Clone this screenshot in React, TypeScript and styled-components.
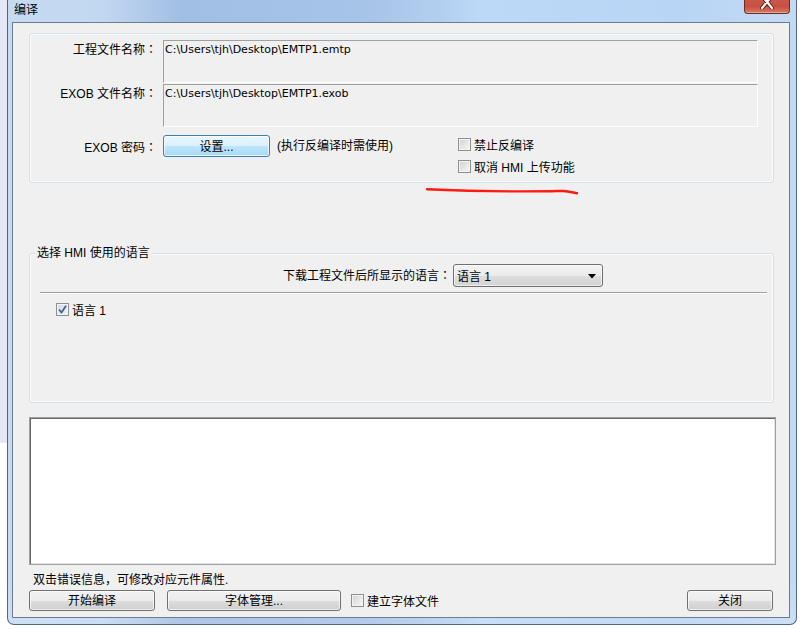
import React from 'react';
import styled, { createGlobalStyle } from 'styled-components';

const Global = createGlobalStyle`
  html, body { margin: 0; padding: 0; background: #fff; }
  body {
    font-family: "Liberation Sans", "Noto Sans CJK SC", sans-serif;
    font-size: 12px;
    color: #000;
  }
  * { box-sizing: border-box; }
`;

const Desktop = styled.div`
  display: flex;
  width: 805px;
  height: 629px;
  overflow: hidden;
  background: #fff;
`;

const DesktopStrip = styled.div`
  width: 7px;
  flex: none;
  background: linear-gradient(to bottom, #e6e7f7 0, #e6e7f7 443px, #fff 443px);
`;

const Window = styled.div`
  width: 790px;
  height: 625px;
  flex: none;
  border: 1px solid #54667b;
  border-top: none;
  border-radius: 0 0 7px 7px;
  background:
    linear-gradient(to bottom, rgba(255,255,255,0) 0, rgba(255,255,255,0) 580px, rgba(255,255,255,0.15) 625px),
    linear-gradient(to right, #c6daf1 0%, #c2d8f1 12%, #a1bee4 22%, #a6c3e8 45%, #b3cff0 55%, #bcd9f8 60%, #b8d5f5 85%, #c3daf3 100%);
  display: flex;
  flex-direction: column;
  padding: 0 6px 6px 4px;
`;

const TitleBar = styled.div`
  height: 22px;
  flex: none;
  display: flex;
  align-items: flex-start;
  justify-content: space-between;
  padding-left: 2px;
`;

const TitleText = styled.div`
  font-family: "Noto Sans CJK SC", sans-serif;
  font-size: 12px;
  line-height: 14px;
  margin-top: 2px;
  color: #000;
`;

const CloseButton = styled.div`
  width: 46px;
  height: 14px;
  border: 1px solid #6c2b24;
  border-top: none;
  border-radius: 0 0 4px 4px;
  background: linear-gradient(to bottom, #c8584c 0%, #c9503f 50%, #d77a66 100%);
  box-shadow: inset 0 -1px 0 rgba(255,255,255,0.35);
  display: flex;
  justify-content: center;
  align-items: flex-start;
`;

const Client = styled.div`
  flex: 1;
  border: 1px solid #6d7d8e;
  background: #f0f0f0;
  display: flex;
  flex-direction: column;
  padding: 10px 0 0 16px;
  position: relative;
`;

const GroupBox = styled.div`
  width: 745px;
  height: 150px;
  flex: none;
  border: 1px solid #d5dfe5;
  border-radius: 3px;
  box-shadow: inset 0 0 0 1px #fbfbfb;
  position: relative;
`;

const TopGroup = styled(GroupBox)`
  padding: 6px 15px 0 0;
  display: flex;
  flex-direction: column;
`;

const LangGroup = styled(GroupBox)`
  margin-top: 70px;
  padding-top: 10px;
  display: flex;
  flex-direction: column;
`;

const Legend = styled.div`
  position: absolute;
  top: -8px;
  left: 5px;
  padding: 0 2px;
  line-height: 14px;
  background: #f0f0f0;
`;

const Colon = styled.span`
  font-family: "Noto Sans CJK TC", sans-serif;
`;

const FieldRow = styled.div<{ $gap?: number }>`
  display: grid;
  grid-template-columns: 127px 1fr;
  column-gap: 6px;
  margin-top: ${(p) => p.$gap ?? 0}px;
`;

const FieldLabel = styled.div`
  text-align: right;
  line-height: 14px;
  padding-top: 2px;
  white-space: nowrap;
`;

const ReadOnlyField = styled.div`
  height: 43px;
  border-top: 1px solid #a0a0a0;
  border-left: 1px solid #a0a0a0;
  border-right: 1px solid #fff;
  border-bottom: 1px solid #fff;
  padding: 2px 0 0 1px;
  font-family: "DejaVu Sans", "Noto Sans CJK SC", sans-serif;
  font-size: 11px;
  line-height: 13px;
  white-space: nowrap;
`;

const PasswordRow = styled.div`
  display: flex;
  align-items: flex-start;
  margin-top: 8px;
`;

const RowLabel = styled.div`
  width: 127px;
  margin-right: 6px;
  text-align: right;
  line-height: 23px;
  white-space: nowrap;
`;

const Hint = styled.div`
  width: 181px;
  margin-left: 7px;
  line-height: 23px;
  white-space: nowrap;
`;

const CheckColumn = styled.div`
  display: flex;
  flex-direction: column;
  gap: 3px;
`;

const CheckRow = styled.label<{ $indent?: number; $top?: number }>`
  height: 19px;
  display: flex;
  align-items: center;
  gap: 3px;
  white-space: nowrap;
  margin-left: ${(p) => p.$indent ?? 0}px;
  margin-top: ${(p) => p.$top ?? 0}px;
`;

const Box = styled.span<{ $checked?: boolean }>`
  width: 13px;
  height: 13px;
  flex: none;
  border: 1px solid #8e8f8f;
  background: ${(p) =>
    p.$checked
      ? 'linear-gradient(135deg, #d3d9e6 0%, #eef1f6 100%)'
      : 'linear-gradient(135deg, #cfcfcf 0%, #e9e9e9 60%, #f7f7f7 100%)'};
  box-shadow: inset 0 0 0 1px #f4f4f4;
  display: flex;
  align-items: center;
  justify-content: center;
`;

const buttonBase = `
  height: 21px;
  border: 1px solid #707070;
  border-radius: 3px;
  background: linear-gradient(to bottom, #f2f2f2 0%, #ebebeb 50%, #dddddd 51%, #cfcfcf 100%);
  box-shadow: inset 0 0 0 1px rgba(255,255,255,0.7);
  font: inherit;
  color: #000;
  padding: 0;
  display: flex;
  align-items: center;
  justify-content: center;
  line-height: 14px;
`;

const Button = styled.button<{ $w: number; $ml?: number }>`
  ${buttonBase}
  width: ${(p) => p.$w}px;
  margin-left: ${(p) => p.$ml ?? 0}px;
  flex: none;
`;

const BlueButton = styled(Button)`
  height: 22px;
  border-color: #3c7fb1;
  background: linear-gradient(to bottom, #eaf6fd 0%, #d9f0fc 50%, #bee6fd 51%, #a7d9f5 100%);
  padding-top: 1px;
`;

const ComboRow = styled.div`
  display: flex;
  align-items: center;
  padding-left: 253px;
`;

const ComboLabel = styled.div`
  line-height: 14px;
  margin-right: 2px;
  white-space: nowrap;
`;

const Combo = styled.div`
  width: 150px;
  height: 23px;
  border: 1px solid #707070;
  border-radius: 3px;
  background: linear-gradient(to bottom, #f2f2f2 0%, #ebebeb 50%, #dddddd 51%, #d4d4d4 100%);
  box-shadow: inset 0 0 0 1px rgba(255,255,255,0.6);
  display: flex;
  align-items: center;
  justify-content: space-between;
  padding: 2px 6px 0 3px;
  line-height: 14px;
`;

const Separator = styled.div`
  width: 727px;
  height: 2px;
  margin: 5px 0 0 10px;
  border-top: 1px solid #a0a0a0;
  border-bottom: 1px solid #fff;
`;

const ListBox = styled.div`
  width: 747px;
  height: 148px;
  flex: none;
  margin-top: 14px;
  background: #fff;
  border: 1px solid #a0a0a0;
  box-shadow: inset 1px 1px 0 #696969, inset -1px -1px 0 #e3e3e3;
`;

const Status = styled.div`
  margin: 8px 0 0 4px;
  line-height: 14px;
`;

const ButtonRow = styled.div`
  width: 744px;
  margin-top: 3px;
  display: flex;
  align-items: center;
`;

const CloseBtn = styled(Button)`
  margin-left: auto;
`;

const Scribble = styled.svg`
  position: absolute;
  left: 410px;
  top: 162px;
  width: 160px;
  height: 12px;
  overflow: visible;
`;

const Check = ({ checked }: { checked?: boolean }) => (
  <Box $checked={checked}>
    {checked && (
      <svg width="9" height="9" viewBox="0 0 9 9">
        <path d="M1 4.5 L3.5 7.5 L8 0.8" fill="none" stroke="#4a5f8f" strokeWidth="1.8" strokeLinejoin="round" />
      </svg>
    )}
  </Box>
);

export default function App() {
  return (
    <>
      <Global />
      <Desktop>
        <DesktopStrip />
        <Window>
          <TitleBar>
            <TitleText>编译</TitleText>
            <CloseButton>
              <svg width="14" height="9" viewBox="0 0 14 9">
                <path d="M2 -4 L12 8 M12 -4 L2 8" stroke="#5a1a14" strokeWidth="4" strokeLinecap="round" />
                <path d="M2 -4 L12 8 M12 -4 L2 8" stroke="#fff" strokeWidth="2.2" strokeLinecap="round" />
              </svg>
            </CloseButton>
          </TitleBar>
          <Client>
            <TopGroup>
              <FieldRow>
                <FieldLabel>工程文件名称<Colon>：</Colon></FieldLabel>
                <ReadOnlyField>C:\Users\tjh\Desktop\EMTP1.emtp</ReadOnlyField>
              </FieldRow>
              <FieldRow $gap={1}>
                <FieldLabel>EXOB 文件名称<Colon>：</Colon></FieldLabel>
                <ReadOnlyField>C:\Users\tjh\Desktop\EMTP1.exob</ReadOnlyField>
              </FieldRow>
              <PasswordRow>
                <RowLabel>EXOB 密码<Colon>：</Colon></RowLabel>
                <BlueButton $w={107}>设置...</BlueButton>
                <Hint>(执行反编译时需使用)</Hint>
                <CheckColumn>
                  <CheckRow>
                    <Check />
                    禁止反编译
                  </CheckRow>
                  <CheckRow>
                    <Check />
                    取消 HMI 上传功能
                  </CheckRow>
                </CheckColumn>
              </PasswordRow>
            </TopGroup>
            <Scribble viewBox="0 0 160 12">
              <path
                d="M4 4.3 C 30 5.6, 60 6.6, 100 6.4 S 132 5.8, 140 6 C 146 6.2, 150 7.6, 154 8.3"
                fill="none"
                stroke="#ff1a12"
                strokeWidth="2.4"
                strokeLinecap="round"
              />
            </Scribble>
            <LangGroup>
              <Legend>选择 HMI 使用的语言</Legend>
              <ComboRow>
                <ComboLabel>下载工程文件后所显示的语言<Colon>：</Colon></ComboLabel>
                <Combo>
                  <span>语言 1</span>
                  <svg width="8" height="5" viewBox="0 0 8 5">
                    <path d="M0 0 L8 0 L4 4.5 Z" fill="#000" />
                  </svg>
                </Combo>
              </ComboRow>
              <Separator />
              <CheckRow $indent={26} $top={6}>
                <Check checked />
                语言 1
              </CheckRow>
            </LangGroup>
            <ListBox />
            <Status>双击错误信息，可修改对应元件属性.</Status>
            <ButtonRow>
              <Button $w={126}>开始编译</Button>
              <Button $w={174} $ml={12}>字体管理...</Button>
              <CheckRow $indent={10}>
                <Check />
                建立字体文件
              </CheckRow>
              <CloseBtn $w={86}>关闭</CloseBtn>
            </ButtonRow>
          </Client>
        </Window>
      </Desktop>
    </>
  );
}
